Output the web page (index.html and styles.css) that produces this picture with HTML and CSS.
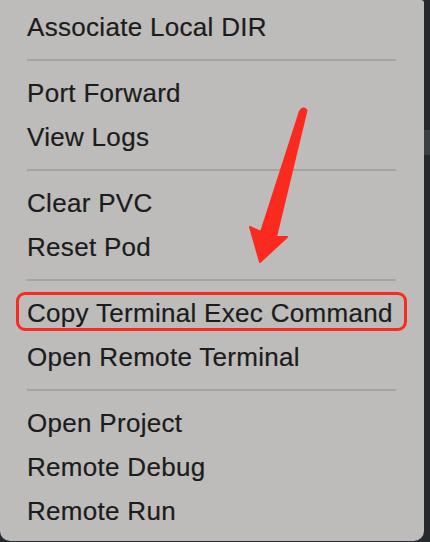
FILE: index.html
```html
<!DOCTYPE html>
<html>
<head>
<meta charset="utf-8">
<link rel="stylesheet" href="styles.css">
</head>
<body>
<div class="screen">
  <div class="menu">
    <div class="item">Associate Local DIR</div>
    <div class="sep"></div>
    <div class="item">Port Forward</div>
    <div class="item">View Logs</div>
    <div class="sep"></div>
    <div class="item">Clear PVC</div>
    <div class="item">Reset Pod</div>
    <div class="sep"></div>
    <div class="item">Copy Terminal Exec Command</div>
    <div class="item">Open Remote Terminal</div>
    <div class="sep"></div>
    <div class="item">Open Project</div>
    <div class="item">Remote Debug</div>
    <div class="item">Remote Run</div>
    <div class="highlight"></div>
    <svg class="arrow" width="430" height="542" viewBox="0 0 430 542">
      <path d="M300 111 L306.5 110.5 L276 237 L287 237 L260 262 L250 227 L261 232 Z" fill="#fb2a1f" stroke="#fb2a1f" stroke-width="2" stroke-linejoin="round"/>
      <circle cx="303.5" cy="111" r="3.5" fill="#fb2a1f"/>
    </svg>
  </div>
  <div class="side">
    <div class="strip"></div>
  </div>
</div>
</body>
</html>
```

FILE: styles.css
```css
html, body {
  margin: 0;
  padding: 0;
}
body {
  width: 430px;
  height: 542px;
  overflow: hidden;
  background: #25282d;
  font-family: "Liberation Sans", Arial, sans-serif;
}
.screen {
  display: flex;
  height: 542px;
  align-items: flex-start;
}
.menu {
  position: relative;
  width: 424px;
  flex: 0 0 424px;
  box-sizing: border-box;
  background: #bebcbb;
  padding: 5px 0 8px 0;
  border-radius: 0 3px 10px 10px;
  color: #1c1c1c;
}
.item {
  height: 44px;
  line-height: 44px;
  font-size: 26px;
  letter-spacing: 0.3px;
  padding-left: 27px;
  white-space: nowrap;
  -webkit-text-stroke: 0.2px #1c1c1c;
}
.sep {
  height: 2px;
  margin: 10px 28px 10px 27px;
  background: #a6a4a3;
}
.highlight {
  position: absolute;
  left: 16px;
  top: 292px;
  width: 391px;
  height: 39px;
  box-sizing: border-box;
  border: 3.5px solid #fb2a1f;
  border-radius: 9px;
}
.arrow {
  position: absolute;
  left: 0;
  top: 0;
}
.side {
  flex: 1;
  height: 542px;
  background: #25282d;
}
.strip {
  margin-top: 130px;
  height: 25px;
  background: #3a3f46;
}
```
